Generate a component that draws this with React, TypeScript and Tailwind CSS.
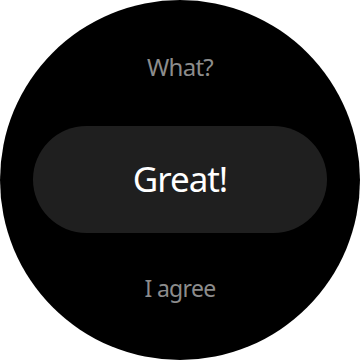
export default function App() {
  return (
    <div className="w-[360px] h-[360px] bg-white">
      <div
        className="w-[360px] h-[360px] rounded-full bg-black flex flex-col items-center"
        style={{ fontFamily: '"Noto Sans", "Open Sans", sans-serif' }}
      >
        <div className="mt-[50px] h-[34px] flex items-center text-[24px] tracking-[-0.03em] text-[#8c8c8c]">What?</div>
        <div className="mt-[42px] w-[294px] h-[107px] rounded-full bg-[#1f1f1f] flex items-center justify-center text-[35px] tracking-[-0.03em] text-white">
          Great!
        </div>
        <div className="mt-[38px] h-[34px] flex items-center text-[23px] tracking-[-0.03em] text-[#8c8c8c]">I agree</div>
      </div>
    </div>
  );
}
